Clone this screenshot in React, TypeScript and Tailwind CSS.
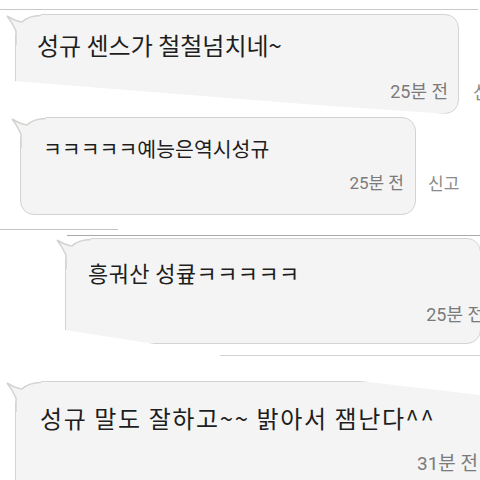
import React from "react";

const FONT = "font-['Noto_Sans_CJK_KR','Noto_Sans',sans-serif]";
const META = "font-['Roboto','Noto_Sans_CJK_KR',sans-serif]";

function Tail() {
  return (
    <svg
      className="pointer-events-none absolute left-[-11px] top-[-2px]"
      width="36"
      height="32"
      viewBox="0 0 36 32"
    >
      <rect x="0" y="0" width="36" height="22" fill="#ffffff" />
      <path
        d="M36 2.5 Q24 2.5 17 9 Q10 8 2 3 Q7 9 11 18 L11 32 L36 32 Z"
        fill="#f4f4f4"
      />
      <path
        d="M36 2.5 Q24 2.5 17 9 Q10 8 2 3 Q7 9 11 18 L11 32"
        fill="none"
        stroke="#d2d4d0"
        strokeWidth="1.5"
      />
    </svg>
  );
}

interface BubbleProps {
  text: string;
  time: string;
  className: string;
  textClass: string;
  timeClass: string;
}

function Bubble({ text, time, className, textClass, timeClass }: BubbleProps) {
  return (
    <div
      className={`relative shrink-0 rounded-[14px] rounded-tl-none border-[1.5px] border-[#d2d4d0] bg-[#f4f4f4] ${className}`}
    >
      <Tail />
      <div className={`${FONT} whitespace-nowrap text-[#1e1e1e] ${textClass}`}>{text}</div>
      <div className={`flex justify-end ${timeClass}`}>
        <span className={`${META} whitespace-nowrap text-[#7b7b7b]`}>{time}</span>
      </div>
    </div>
  );
}

export default function App() {
  return (
    <div className="h-[480px] w-[480px] overflow-hidden bg-white">
      {/* strip 1 */}
      <div className="relative z-10 h-[106px] [clip-path:polygon(0_0,100%_0,100%_116px,330px_106px,0_80px)]">
        <div className="h-[9px]" />
        <div className="h-px w-[478px] bg-[#c9c9c9]" />
        <div className="flex items-start">
          <Bubble
            text="성규 센스가 철철넘치네~"
            time="25분 전"
            className="ml-[15px] mt-[4px] h-[100px] w-[444px]"
            textClass="pl-[21px] pt-[15px] text-[24px] leading-[30px]"
            timeClass="mt-[22px] pr-[10px] text-[18px] leading-[20px]"
          />
          <span className={`${META} ml-[14px] mt-[73px] whitespace-nowrap text-[18px] leading-[20px] text-[#8a8a8a]`}>
            신고
          </span>
        </div>
      </div>

      {/* strip 2 */}
      <div className="flex items-start">
        <Bubble
          text="ㅋㅋㅋㅋㅋ예능은역시성규"
          time="25분 전"
          className="ml-[20px] mt-[11px] h-[98px] w-[396px]"
          textClass="pl-[22px] pt-[16px] text-[20.5px] leading-[28px]"
          timeClass="mt-[11px] pr-[11px] text-[17px] leading-[20px]"
        />
        <span className={`${META} ml-[12px] mt-[68px] whitespace-nowrap text-[17px] leading-[20px] text-[#8a8a8a]`}>
          신고
        </span>
      </div>
      <div className="mt-[14px] h-px w-[118px] bg-[#c4c4c4]" />

      {/* strip 3 */}
      <div className="mt-[5px] ml-[67px] h-px bg-[#a9a9a9]" />
      <div className="flex items-start">
        <div className="ml-[33px] mt-[1px] h-[88px] w-px bg-[#ececec]" />
        <div className="ml-[32px] mt-[2px] [clip-path:polygon(-20px_-10px,100%_-10px,100%_100%,90px_100%,0_92px,-20px_92px)]">
          <Bubble
            text="흥궈산 성큪ㅋㅋㅋㅋㅋ"
            time="25분 전"
            className="h-[106px] w-[416px]"
            textClass="pl-[22px] pt-[18px] text-[22px] leading-[30px] tracking-[0.4px]"
            timeClass="mt-[18px] mr-[-4px] text-[18px] leading-[20px]"
          />
        </div>
      </div>
      <div className="mt-[11px] ml-[220px] h-px bg-[#d2d2d2]" />

      {/* strip 4 */}
      <div className="mt-[25px] ml-[15px] [clip-path:polygon(-20px_-10px,345px_-10px,345px_0,465px_14px,465px_200px,-20px_200px)]">
        <Bubble
          text="성규 말도 잘하고~~ 밝아서 잼난다^^"
          time="31분 전"
          className="h-[120px] w-[476px]"
          textClass="pl-[24px] pt-[20px] text-[24px] leading-[32px] tracking-[1.6px]"
          timeClass="mt-[19px] pr-[12px] text-[19px] leading-[22px]"
        />
      </div>
    </div>
  );
}
